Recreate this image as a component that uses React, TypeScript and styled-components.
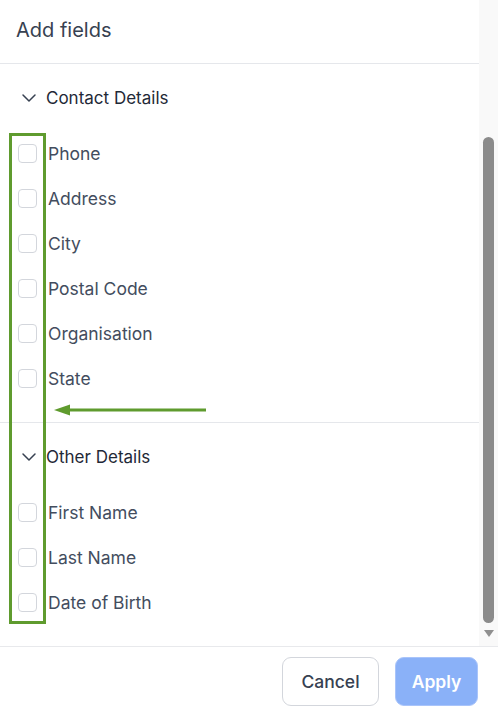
import { createGlobalStyle } from 'styled-components';
import styled from 'styled-components';
import { ChevronDown } from 'lucide-react';

const sections = [
    { title: 'Contact Details', fields: ['Phone', 'Address', 'City', 'Postal Code', 'Organisation', 'State'] },
    { title: 'Other Details', fields: ['First Name', 'Last Name', 'Date of Birth'] },
];

const GlobalStyle = createGlobalStyle`
    html, body {
        margin: 0;
        padding: 0;
        background: #ffffff;
        font-family: Inter, 'Noto Sans', sans-serif;
    }
`;

export default function App() {
    return (
        <>
            <GlobalStyle />
            <Panel>
                <Body>
                    <Main>
                        <Header>Add fields</Header>
                        {sections.map((s) => (
                            <Section key={s.title}>
                                <SectionHead>
                                    <ChevronDown size={24} strokeWidth={1.5} color="#374151" />
                                    <span>{s.title}</span>
                                </SectionHead>
                                <FieldList>
                                    {s.fields.map((f) => (
                                        <Field key={f}>
                                            <Box type="checkbox" />
                                            <FieldLabel>{f}</FieldLabel>
                                        </Field>
                                    ))}
                                </FieldList>
                            </Section>
                        ))}
                        <Highlight />
                        <Arrow width="152" height="14" viewBox="0 0 152 14">
                            <line x1="10" y1="7" x2="152" y2="7" stroke="#5f9b2e" strokeWidth="3" />
                            <polygon points="0,7 16,1.5 16,12.5" fill="#5f9b2e" />
                        </Arrow>
                    </Main>
                    <Track>
                        <Thumb />
                        <DownArrow />
                    </Track>
                </Body>
                <Footer>
                    <CancelButton>Cancel</CancelButton>
                    <ApplyButton>Apply</ApplyButton>
                </Footer>
            </Panel>
        </>
    );
}

const Panel = styled.div`
    height: 715px;
    display: flex;
    flex-direction: column;
`;

const Body = styled.div`
    height: 646px;
    display: flex;
    border-bottom: 1px solid #e8e9ec;
`;

const Main = styled.div`
    flex: 1;
    position: relative;
`;

const Header = styled.div`
    height: 59px;
    padding: 0 0 4px 16px;
    border-bottom: 1px solid #e5e7eb;
    display: flex;
    align-items: center;
    font-size: 20px;
    color: #374151;
`;

const Section = styled.div`
    padding: 16px 0 21px;
    & + & {
        border-top: 1px solid #e5e7eb;
    }
`;

const SectionHead = styled.div`
    height: 36px;
    display: flex;
    align-items: center;
    gap: 5px;
    padding-left: 17px;
    font-size: 17px;
    color: #1f2937;
`;

const FieldList = styled.div`
    margin-top: 15px;
    display: flex;
    flex-direction: column;
`;

const Field = styled.label`
    height: 45px;
    display: flex;
    align-items: center;
    gap: 11px;
    padding-left: 18px;
`;

const Box = styled.input`
    appearance: none;
    margin: 0;
    width: 19px;
    height: 19px;
    border: 1px solid #d3d6dc;
    border-radius: 4px;
    background: #fff;
`;

const FieldLabel = styled.span`
    font-size: 17.5px;
    color: #434d5e;
`;

const Highlight = styled.div`
    position: absolute;
    left: 9px;
    top: 133px;
    width: 31px;
    height: 485px;
    border: 3px solid #5f9b2e;
`;

const Arrow = styled.svg`
    position: absolute;
    left: 54px;
    top: 403px;
`;

const Track = styled.div`
    width: 19px;
    background: #f9f9f9;
    display: flex;
    flex-direction: column;
    align-items: center;
    padding-top: 137px;
`;

const Thumb = styled.div`
    width: 11px;
    height: 486px;
    background: #8b8b8b;
    border-radius: 6px;
`;

const DownArrow = styled.div`
    margin-top: 7px;
    width: 0;
    height: 0;
    border-left: 5px solid transparent;
    border-right: 5px solid transparent;
    border-top: 7px solid #8f8f8f;
`;

const Footer = styled.div`
    flex: 1;
    display: flex;
    justify-content: flex-end;
    align-items: flex-start;
    gap: 16px;
    padding: 10px 20px 0 0;
`;

const CancelButton = styled.button`
    width: 97px;
    height: 49px;
    border: 1px solid #d3d6dc;
    border-radius: 9px;
    background: #fff;
    font-family: Inter, sans-serif;
    font-size: 17.5px;
    font-weight: 500;
    color: #374151;
`;

const ApplyButton = styled.button`
    width: 83px;
    height: 49px;
    border: 1px solid #a9c4fa;
    border-radius: 9px;
    background: #8ab1f8;
    font-family: Inter, sans-serif;
    font-size: 17.5px;
    font-weight: 600;
    color: #fff;
`;
